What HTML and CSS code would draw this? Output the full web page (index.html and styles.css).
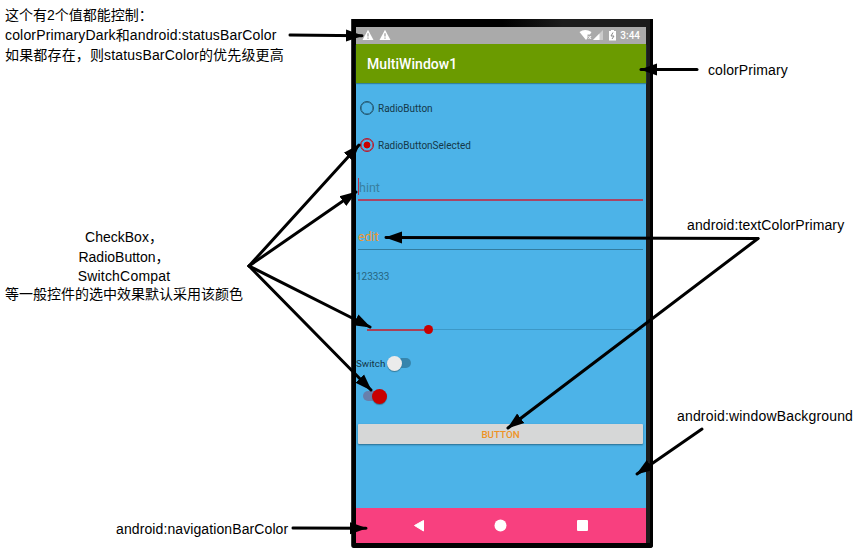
FILE: index.html
```
<!DOCTYPE html>
<html lang="zh-CN">
<head>
<meta charset="utf-8">
<title>MultiWindow1</title>
<link rel="stylesheet" href="styles.css">
</head>
<body>
<main class="canvas">
  <section class="phone">
    <div class="screen">
      <header class="status">
        <svg class="warn" viewBox="0 0 12 12"><path d="M6 .8 11.500 11H.5z" fill="#fff"/><path d="M6 4.300v3.200M6 8.500v1.200" stroke="#999" stroke-width="1.200"/></svg>
        <svg class="warn" viewBox="0 0 12 12"><path d="M6 .8 11.500 11H.5z" fill="#fff"/><path d="M6 4.300v3.200M6 8.500v1.200" stroke="#999" stroke-width="1.200"/></svg>
        <svg class="signals" viewBox="0 0 40 12"><path d="M.5 3Q6-1 12.500 3L11 5.500H8.500V9l-1.500 2z" fill="#fff"/><path d="m9.500 7 2.600 3M12.100 7 9.500 10" stroke="#fff"/><path d="M24 1v10H14z" fill="#ccc"/><path d="M20.500 4.500V11H14z" fill="#fff"/><path d="M30 2h2V1h3v1h2v9.500h-7z" fill="#fff"/><path d="m34 3.500-2 3.500h3L33 10" stroke="#888" fill="none"/></svg>
        <span class="clock">3:44</span>
      </header>
      <div class="appbar">MultiWindow1</div>
      <div class="content">
        <div class="radio"><i class="ring"></i><span>RadioButton</span></div>
        <div class="radio second"><i class="ring on"></i><span>RadioButtonSelected</span></div>
        <div class="field focused"><i class="caret"></i><span>hint</span></div>
        <div class="field edit"><span>edit</span></div>
        <div class="number">123333</div>
        <div class="slider"><i class="done"></i><i class="knob"></i><i class="rest"></i></div>
        <div class="switch"><span>Switch</span><i class="thumb"></i><i class="track"></i></div>
        <div class="switch checked"><i class="track"></i><i class="thumb"></i></div>
        <div class="button">BUTTON</div>
      </div>
      <svg class="navbar" viewBox="0 0 290 35"><path d="M58.500 17.500 67.500 12.500v10.500z" fill="#fff" stroke="#fff" stroke-linejoin="round"/><circle cx="144.500" cy="17.500" r="6" fill="#fff"/><rect x="221" y="12" width="11" height="11" rx="1" fill="#fff"/></svg>
    </div>
  </section>

  <svg class="arrows" viewBox="0 0 860 548">
    <defs><marker id="head" markerUnits="userSpaceOnUse" markerWidth="18" markerHeight="14" refX="16" refY="6.500" orient="auto"><path d="M0 .5 17 6.500 0 12.500z"/></marker></defs>
    <g fill="none" stroke="#000" stroke-width="3" stroke-linecap="round" stroke-linejoin="round" marker-end="url(#head)">
      <path d="M290 35 362 35.800"/>
      <path d="M697 69.500H641"/>
      <path d="M249 266 359 145"/>
      <path d="M249 266 356 192"/>
      <path d="M249 266 370 327"/>
      <path d="M249 266 371 390"/>
      <path d="M758 238.500 386 237.500"/>
      <path d="M758 238.500 508 428"/>
      <path d="M702 429 637 474"/>
      <path d="M293 528 366 528.300"/>
    </g>
  </svg>

  <div class="note status-note"><p>这个有2个值都能控制：</p><p class="wide">colorPrimaryDark和android:statusBarColor</p><p class="wide">如果都存在，则statusBarColor的优先级更高</p></div>
  <div class="note accent-note"><p>CheckBox，</p><p>RadioButton，</p><p class="tight latin">SwitchCompat</p><p class="tight">等一般控件的选中效果默认采用该颜色</p></div>
  <div class="note primary-note">colorPrimary</div>
  <div class="note text-note">android:textColorPrimary</div>
  <div class="note window-note">android:windowBackground</div>
  <div class="note nav-note">android:navigationBarColor</div>
</main>
</body>
</html>
```
FILE: styles.css
```
* { box-sizing: border-box; }
body { margin: 0; background: #fff; }
p { margin: 0; }
i { display: block; flex: none; }
.canvas { position: relative; width: 860px; height: 548px; overflow: hidden; }
.phone {
  position: absolute; left: 351px; top: 19px; width: 302px; height: 529px;
  padding: 8px 7px 5px 4px;
  border-left: 1px solid #333; border-radius: 0 0 3px 3px;
  background: linear-gradient(90deg, #000 0 50%, #1c1c1c 70% 99%, #000 99%);
}
.phone::after {
  content: ""; position: absolute; left: 0; right: 0; bottom: 0; height: 5px;
  background: #030303; border-radius: 0 0 3px 3px;
}
.screen {
  display: flex; flex-direction: column; width: 290px; height: 516px;
  background: #4cb3e8; font-family: Roboto, sans-serif; color: #17485e;
}
.status {
  flex: none; height: 16.500px; display: flex; align-items: center;
  padding: 0 6px; background: #aaa; color: #fff;
}
.warn { width: 12px; height: 12px; margin-right: 5px; }
.signals { width: 40px; height: 12px; margin-left: auto; }
.clock { width: 20px; margin-left: 1px; font-size: 10px; font-weight: 500; text-align: right; white-space: nowrap; }
.appbar {
  flex: none; height: 39.500px; padding-left: 11px; background: #6b9b00; color: #fff;
  font-size: 14px; font-weight: 500; line-height: 41px; letter-spacing: .05px;
  box-shadow: 0 1px 1px #35829a;
}
.content { flex: 1; }
.radio { display: flex; align-items: center; height: 14px; margin: 18px 0 0 4px; font-size: 10px; letter-spacing: -.02px; gap: 4px; color: #153848; }
.radio.second { margin-top: 23px; }
.ring { width: 14px; height: 14px; border: 1.500px solid #24566e; border-radius: 50%; }
.ring { box-shadow: inset 0 0 0 .5px #24566e; }
.ring.on { border-color: #c21525; box-shadow: inset 0 0 0 .5px #c21525; background: radial-gradient(circle, #c90000 0 3.200px, transparent 3.700px); }
.field {
  display: flex; align-items: center; height: 28px; margin: 21px 3px 0 2px;
  border-bottom: 2px solid #aa4565; font-size: 12.500px; color: #397f9f;
}
.field.focused { padding-top: 3px; }
.caret { width: 1px; height: 17px; margin: -2px 0 0; background: #bb3048; }
.field.edit { border-bottom: 1px solid #327c9f; color: #ee9733; padding-top: 2px; }
.number { margin-top: 20px; font-size: 10px; line-height: 14px; letter-spacing: -.05px; color: #286782; }
.slider { display: flex; align-items: center; height: 9px; margin: 41px 3px 0 11px; }
.done { width: 57px; height: 2px; background: #aa4056; }
.knob { width: 9px; height: 9px; border-radius: 50%; background: #c90000; }
.rest { flex: 1; height: 1px; background: #3c98c7; }
.switch { display: flex; align-items: center; height: 16px; margin-top: 21px; font-size: 9.800px; color: #153848; }
.switch .thumb { position: relative; width: 15px; height: 15px; margin-left: 2px; border-radius: 50%; background: #ebebeb; box-shadow: 0 1px 1px #347998; }
.switch .track { width: 17px; height: 10px; margin-left: -8px; border-radius: 5px; background: #3685ad; }
.switch.checked { margin: 17px 0 0 7px; }
.switch.checked .track { margin-left: 0; background: #687fab; }
.switch.checked .thumb { margin-left: -8px; background: #c90000; }
.button {
  height: 20px; margin: 20px 3px 0 2px; border-radius: 1px; background: #d6d7d7;
  box-shadow: 0 1px 2px #286b8c; color: #ee9325; font-size: 9.800px; font-weight: 500;
  line-height: 21px; text-align: center;
}
.navbar { flex: none; width: 290px; height: 35px; background: #f8407f; }
.arrows { position: absolute; left: 0; top: 0; width: 860px; height: 548px; }
.note {
  position: absolute; white-space: nowrap; color: #000; letter-spacing: .1px;
  font: 14px/20px "Liberation Sans", "Noto Sans CJK SC", sans-serif;
}
.status-note { left: 5px; top: 5px; letter-spacing: 0; }
.status-note .wide { letter-spacing: .16px; }
.accent-note { left: 5px; top: 227px; width: 238px; text-align: center; letter-spacing: 0; }
.accent-note .tight { line-height: 18px; }
.accent-note .latin { letter-spacing: .2px; }
.primary-note { left: 708px; top: 60px; }
.text-note { left: 687px; top: 215px; }
.window-note { left: 677px; top: 406px; letter-spacing: .17px; }
.nav-note { left: 116px; top: 519px; }
```
